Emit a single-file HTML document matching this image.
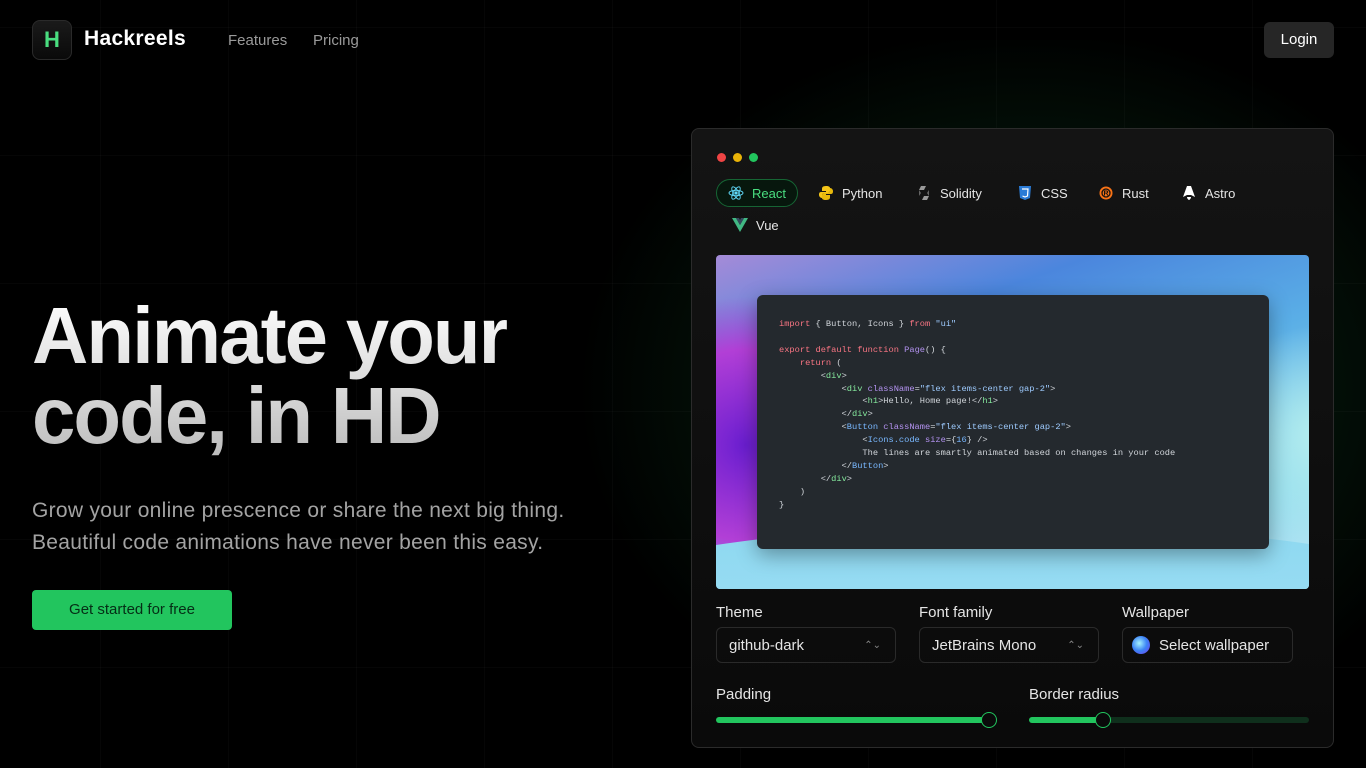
<!DOCTYPE html>
<html><head><meta charset="utf-8"><style>
*{margin:0;padding:0;box-sizing:border-box}
html{width:1366px;height:768px;overflow:hidden;background:#000}
body{width:1366px;height:768px;overflow:hidden;background:#000;font-family:"Liberation Sans",sans-serif;position:relative;color:#fff}
.grid{position:absolute;inset:0;background-image:linear-gradient(to right,rgba(255,255,255,0.022) 1px,transparent 1px),linear-gradient(to bottom,rgba(255,255,255,0.022) 1px,transparent 1px);background-size:128px 128px;background-position:-28px 27px}
.glow{position:absolute;left:560px;top:40px;width:806px;height:728px;background:radial-gradient(ellipse at 58% 48%,rgba(34,197,94,0.26),rgba(34,197,94,0.08) 45%,transparent 68%)}
.logo{position:absolute;left:32px;top:20px;width:40px;height:40px;border:1px solid #2a2a2a;border-radius:8px;background:linear-gradient(#1a1a1a,#0a0a0a);color:#4ade80;font-weight:bold;font-size:22px;text-align:center;line-height:38px}
.brand{position:absolute;left:84px;top:27px;font-size:21px;font-weight:bold;letter-spacing:0.3px}
.nav{position:absolute;top:32px;font-size:15px;color:#9a9a9a}
.login{position:absolute;left:1264px;top:22px;width:70px;height:36px;background:#262626;border-radius:6px;font-size:15px;text-align:center;line-height:36px}
h1{position:absolute;left:32px;top:296px;font-size:80px;line-height:80px;font-weight:bold;letter-spacing:-2px;background:linear-gradient(#fff,#bdbdbd);-webkit-background-clip:text;color:transparent;transform:scaleX(0.975);transform-origin:left;white-space:nowrap}
.sub{position:absolute;left:32px;top:495px;font-size:21px;letter-spacing:0.3px;line-height:32px;color:#a3a3a3;white-space:nowrap}
.cta{position:absolute;left:32px;top:590px;width:200px;height:40px;background:#22c55e;border-radius:4px;color:#052e16;font-size:15px;text-align:center;line-height:40px}
.panel{position:absolute;left:691px;top:128px;width:643px;height:620px;border:1px solid #2b2b2b;border-radius:8px;background:linear-gradient(#141414,#0a0a0a)}
.dot{position:absolute;top:153px;width:9px;height:9px;border-radius:50%}
.tab{position:absolute;font-size:13px;color:#e5e5e5;display:flex;align-items:center;gap:8px}
.wp{position:absolute;left:716px;top:255px;width:593px;height:334px;border-radius:4px;overflow:hidden;background:linear-gradient(160deg,#a58bd8 0%,#4b86dd 25%,#5aaee6 50%,#8ed9ee 80%,#c2e9f5 100%)}
.wp .a{position:absolute;left:-120px;top:40px;width:300px;height:300px;border-radius:50%;background:radial-gradient(#6a1ed0,#b23fd6 45%,transparent 70%)}
.wp .b{position:absolute;left:-200px;top:270px;width:1000px;height:200px;border-radius:50%;background:linear-gradient(#8dd8f0,#a9e2f7)}
.wp .c{position:absolute;left:480px;top:60px;width:260px;height:240px;border-radius:50%;background:radial-gradient(#b8f0ee,transparent 65%)}
.code{position:absolute;left:757px;top:295px;width:512px;height:254px;background:#24292e;border-radius:6px;box-shadow:0 6px 20px rgba(0,0,0,.35);padding:23px 0 0 22px;font-family:"Liberation Mono",monospace;font-size:8.7px;line-height:12.9px;color:#d1d5da;white-space:pre}
.k{color:#f97583}.s{color:#9ecbff}.f{color:#b392f0}.t{color:#85e89d}.c{color:#79b8ff}
.lbl{position:absolute;font-size:15px;color:#e5e5e5}
.sel{position:absolute;top:627px;height:36px;border:1px solid #2a2a2a;border-radius:6px;font-size:15px;color:#e5e5e5;line-height:36px;padding-left:12px}
.sel i{position:absolute;right:14px;top:0;font-style:normal;color:#888;font-size:10px}
.track{position:absolute;top:717px;height:6px;border-radius:3px}
.thumb{position:absolute;top:712px;width:16px;height:16px;border-radius:50%;background:#0a0a0a;border:1.5px solid #22c55e}
</style></head><body>
<div class="grid"></div><div class="glow"></div>
<div class="logo">H</div><div class="brand">Hackreels</div>
<div class="nav" style="left:228px">Features</div><div class="nav" style="left:313px">Pricing</div>
<div class="login">Login</div>
<h1>Animate your<br>code, in HD</h1>
<div class="sub">Grow your online prescence or share the next big thing.<br>Beautiful code animations have never been this easy.</div>
<div class="cta">Get started for free</div>
<div class="panel"></div>
<div class="dot" style="left:717px;background:#ef4444"></div><div class="dot" style="left:733px;background:#eab308"></div><div class="dot" style="left:749px;background:#22c55e"></div>
<div style="position:absolute;left:716px;top:179px;width:82px;height:28px;border:1px solid #166534;border-radius:14px;background:#07170d"></div>
<div class="tab" style="left:728px;top:185px;color:#4ade80"><svg width="16" height="16" viewBox="-8 -8 16 16" fill="none" stroke="#61dafb" stroke-width="0.9"><ellipse rx="7" ry="2.7"/><ellipse rx="7" ry="2.7" transform="rotate(60)"/><ellipse rx="7" ry="2.7" transform="rotate(120)"/><circle r="1.2" fill="#61dafb"/></svg>React</div>
<div class="tab" style="left:818px;top:185px"><svg width="16" height="16" viewBox="0 0 16 16"><path d="M8 1C4 1 4 3 4 4v2h4v1H3C1 7 1 9 1 10s1 3 3 3V10c0-1 1-2 2-2h4c1 0 2-1 2-2V3C12 2 11 1 8 1z" fill="#f5c518"/><path d="M8 15c4 0 4-2 4-3v-2H8V9h5c2 0 2-2 2-3s-1-3-3-3v3c0 1-1 2-2 2H6c-1 0-2 1-2 2v3c0 1 1 2 4 2z" fill="#e8b90c"/></svg>Python</div>
<div class="tab" style="left:916px;top:185px"><svg width="16" height="16" viewBox="0 0 16 16"><path d="M5 1h5l-2 4H3zM11 15H6l2-4h5z" fill="#999"/><path d="M3 5l2 3-2 3zM13 11l-2-3 2-3z" fill="#666"/></svg>Solidity</div>
<div class="tab" style="left:1017px;top:185px"><svg width="16" height="16" viewBox="0 0 16 16"><path d="M2 1h12l-1 12-5 2-5-2z" fill="#2a7bd6"/><path d="M5 4h6l-.5 7L8 12l-2.5-1" fill="none" stroke="#fff" stroke-width="1.2"/></svg>CSS</div>
<div class="tab" style="left:1098px;top:185px"><svg width="16" height="16" viewBox="0 0 16 16"><circle cx="8" cy="8" r="6.5" fill="#f97316"/><circle cx="8" cy="8" r="4" fill="none" stroke="#111" stroke-width="1.3"/><text x="8" y="10.5" font-size="7" text-anchor="middle" fill="#111" font-weight="bold">R</text></svg>Rust</div>
<div class="tab" style="left:1181px;top:185px"><svg width="16" height="16" viewBox="0 0 16 16"><path d="M6 1h4l4 11-4-2H6l-4 2z" fill="#fff"/><path d="M6 12c0 2 2 3 2 3s2-1 2-3z" fill="#fff"/></svg>Astro</div>
<div class="tab" style="left:732px;top:217px"><svg width="16" height="16" viewBox="0 0 16 16"><path d="M0 1h4l4 7 4-7h4L8 15z" fill="#41b883"/><path d="M4 1h3l1 2 1-2h3L8 8z" fill="#35495e"/></svg>Vue</div>
<div class="wp"><div class="a"></div><div class="c"></div><div class="b"></div></div>
<div class="code"><span class="k">import</span> { Button, Icons } <span class="k">from</span> <span class="s">"ui"</span>

<span class="k">export default function</span> <span class="f">Page</span>() {
    <span class="k">return</span> (
        &lt;<span class="t">div</span>&gt;
            &lt;<span class="t">div</span> <span class="f">className</span>=<span class="s">"flex items-center gap-2"</span>&gt;
                &lt;<span class="t">h1</span>&gt;Hello, Home page!&lt;/<span class="t">h1</span>&gt;
            &lt;/<span class="t">div</span>&gt;
            &lt;<span class="c">Button</span> <span class="f">className</span>=<span class="s">"flex items-center gap-2"</span>&gt;
                &lt;<span class="c">Icons.code</span> <span class="f">size</span>={<span class="c">16</span>} /&gt;
                The lines are smartly animated based on changes in your code
            &lt;/<span class="c">Button</span>&gt;
        &lt;/<span class="t">div</span>&gt;
    )
}</div>
<div class="lbl" style="left:716px;top:604px">Theme</div>
<div class="lbl" style="left:919px;top:604px">Font family</div>
<div class="lbl" style="left:1122px;top:604px">Wallpaper</div>
<div class="sel" style="left:716px;width:180px">github-dark<i>⌃⌄</i></div>
<div class="sel" style="left:919px;width:180px">JetBrains Mono<i>⌃⌄</i></div>
<div class="sel" style="left:1122px;width:171px;padding-left:36px"><span style="position:absolute;left:9px;top:8px;width:18px;height:18px;border-radius:50%;background:radial-gradient(circle at 40% 40%,#a5f3fc,#3b82f6 50%,#7c3aed)"></span>Select wallpaper</div>
<div class="lbl" style="left:716px;top:686px">Padding</div>
<div class="lbl" style="left:1029px;top:686px">Border radius</div>
<div class="track" style="left:716px;width:272px;background:#22c55e"></div>
<div class="thumb" style="left:981px"></div>
<div class="track" style="left:1029px;width:280px;background:#0f2f1c"></div>
<div class="track" style="left:1029px;width:74px;background:#22c55e"></div>
<div class="thumb" style="left:1095px"></div>
</body></html>
